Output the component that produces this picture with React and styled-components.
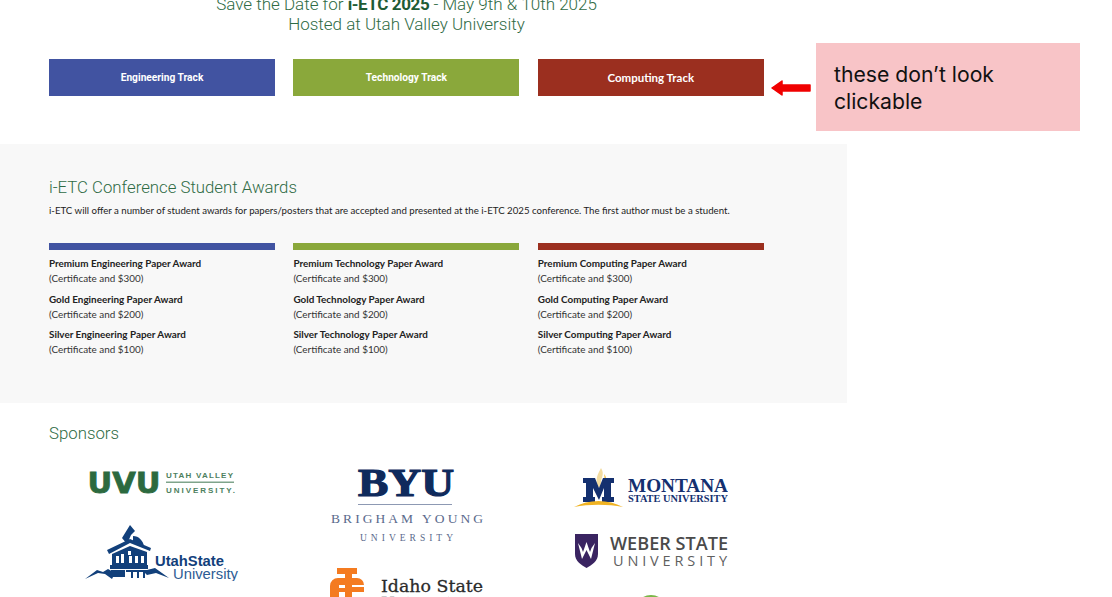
import React from 'react';
import styled, { createGlobalStyle } from 'styled-components';

const COLORS = {
  engineering: '#4153a1',
  technology: '#8aa83b',
  computing: '#9b2f1f',
  heading: '#2f6b45',
  navy: '#0f2a5c',
};

const tracks = [
  { name: 'Engineering', color: COLORS.engineering, font: 'Rajdhani' },
  { name: 'Technology', color: COLORS.technology, font: 'Rajdhani' },
  { name: 'Computing', color: COLORS.computing, font: 'Lato' },
];

const levels = [
  { level: 'Premium', prize: '$300' },
  { level: 'Gold', prize: '$200' },
  { level: 'Silver', prize: '$100' },
];

const GlobalStyle = createGlobalStyle`
  html, body {
    margin: 0;
    padding: 0;
    background: #fff;
  }
`;

const UvuLogo = () => (
  <svg width="147" height="28" viewBox="0 0 147 28">
    <text x="-1.500" y="25" fontFamily="DejaVu Sans" fontWeight="700" fontSize="29" textLength="73" lengthAdjust="spacingAndGlyphs" fill="#2c6a3f" stroke="#2c6a3f" strokeWidth="0.8">UVU</text>
    <text x="77" y="10" fontFamily="Liberation Sans" fontWeight="700" fontSize="8" textLength="67" fill="#4d7f5e">UTAH VALLEY</text>
    <rect x="77" y="13.500" width="68" height="1.500" fill="#7fa48b" />
    <text x="77" y="25" fontFamily="Liberation Sans" fontWeight="700" fontSize="8" textLength="69" fill="#4d7f5e">UNIVERSITY.</text>
  </svg>
);

const UsuLogo = () => (
  <svg width="155" height="58" viewBox="0 0 155 58">
    <g fill="#12407b">
      <path d="M0 56 L12 47 L18 49 L23 46 L30 50 L27 56 L20 51 L13 50 Z" />
      <path d="M58 48 L70 45 L84 55 L71 50 L62 52 Z" />
      <path d="M37 15 L45 2 L50 8 L46 12 L42 21 Z" />
      <path d="M48 13 C54 13 58 18 59 23 L48 19 Z" />
      <path d="M22 27 L45 16 L66 25 L65 28 L45 20 L24 31 Z" />
      <path d="M27 31 L45 23 L62 29 V42 H27 Z" />
      <rect x="25" y="42" width="38" height="4" />
      <rect x="26" y="47" width="14" height="7" />
      <path d="M41 47 H62 V49 H60 V55 H58 V49 H54 V55 H52 V49 H48 V55 H46 V49 H41 Z" />
    </g>
    <path d="M31 33 h3 v7 h-3 z M36 31 h3 v9 h-3 z M43 28 h3 v4 h-3 z M44 33 h3 v7 h-3 z M50 33 h3 v7 h-3 z M56 33 h3 v7 h-3 z" fill="#fff" />
    <text x="70" y="43" fontFamily="Liberation Sans" fontWeight="700" fontSize="14" textLength="69" lengthAdjust="spacingAndGlyphs" fill="#12407b">UtahState</text>
    <text x="88" y="56" fontFamily="Liberation Sans" fontSize="15" textLength="65" lengthAdjust="spacingAndGlyphs" fill="#2d5c94">University</text>
  </svg>
);

const ByuLogo = () => (
  <svg width="153" height="73" viewBox="0 0 153 73">
    <text x="28" y="28" fontFamily="Liberation Serif" fontWeight="700" fontSize="39" textLength="96" lengthAdjust="spacingAndGlyphs" stroke={COLORS.navy} strokeWidth="1.200" fill={COLORS.navy}>BYU</text>
    <rect x="28" y="36" width="94" height="1" fill="#8d99b3" />
    <text x="1" y="55" fontFamily="Liberation Serif" fontSize="13.500" textLength="152" fill="#5a6a8c">BRIGHAM YOUNG</text>
    <text x="30" y="73" fontFamily="Liberation Serif" fontSize="9.500" textLength="93" fill="#5a6a8c">UNIVERSITY</text>
  </svg>
);

const IdahoLogo = () => (
  <svg width="153" height="50" viewBox="0 0 153 50">
    <g fill="#f47b20">
      <rect x="7" y="0" width="20" height="6" />
      <rect x="15" y="6" width="7" height="6" />
      <path d="M8 10 H27 A7 7 0 0 1 34 17 H9 V29 H0 V18 A8 8 0 0 1 8 10 Z" />
      <rect x="15" y="17" width="7" height="12" />
      <path d="M22 19 H34 V24 H22 Z" />
      <path d="M9 20 H15 V24 H9 Z" />
    </g>
    <text x="51" y="24" fontFamily="DejaVu Serif" fontSize="17.500" textLength="102" lengthAdjust="spacingAndGlyphs" stroke="#2b2b2b" strokeWidth="0.3" fill="#2b2b2b">Idaho State</text>
    <text x="51" y="41" fontFamily="DejaVu Serif" fontSize="17.500" textLength="86" lengthAdjust="spacingAndGlyphs" stroke="#2b2b2b" strokeWidth="0.3" fill="#2b2b2b">University</text>
  </svg>
);

const MontanaLogo = () => (
  <svg width="154" height="39" viewBox="0 0 154 39">
    <path d="M25 20 C20 12 24 6 27 0 C31 6 27 10 27 14 C27 17 26 19 25 20 Z" fill="#f3dca0" />
    <path d="M27 20 C28 15 32 11 30 6 C34 10 31 16 27 20 Z" fill="#f0b323" />
    <path d="M9 10 H21 L25 20 L29 10 H40 V15 H37 V29 H40 V34 H28 V29 H30 V20 L25 32 L19 20 V29 H21 V34 H9 V29 H12 V15 H9 Z" fill="#14306f" />
    <path d="M0 39 C15 31 34 31 49 39 C34 36 15 36 0 39 Z" fill="#f0b323" />
    <text x="54" y="24" fontFamily="Liberation Serif" fontWeight="700" fontSize="19" textLength="100" lengthAdjust="spacingAndGlyphs" fill="#14306f">MONTANA</text>
    <text x="54" y="34" fontFamily="Liberation Serif" fontWeight="700" fontSize="10.500" textLength="100" lengthAdjust="spacingAndGlyphs" fill="#14306f">STATE UNIVERSITY</text>
  </svg>
);

const WeberLogo = () => (
  <svg width="154" height="34" viewBox="0 0 154 34">
    <path d="M1 0 H24 V20 C24 27 18 31 12.500 34 C7 31 1 27 1 20 Z" fill="#3a2461" />
    <path d="M4 9 L8 25 L12.500 16 L17 25 L21 9 L17.500 14 L16 18 L12.500 8 L9 18 L7.500 14 Z" fill="#fff" />
    <text x="36" y="16" fontFamily="Open Sans" fontWeight="600" fontSize="17.500" textLength="118" lengthAdjust="spacingAndGlyphs" fill="#4a4a4a">WEBER STATE</text>
    <text x="39" y="32" fontFamily="Open Sans" fontSize="14.500" textLength="114" fill="#5f5f5f">UNIVERSITY</text>
  </svg>
);

const GreenArc = () => (
  <svg width="26" height="10" viewBox="0 0 26 10">
    <ellipse cx="13" cy="10" rx="13" ry="10" fill="#7ab648" />
  </svg>
);

const sponsorColumns = [
  [UvuLogo, UsuLogo],
  [ByuLogo, IdahoLogo],
  [MontanaLogo, WeberLogo, GreenArc],
];

const App = () => {
  return (
    <Page>
      <GlobalStyle />
      <Content>
        <Hero>
          <SaveDate>
            <div>Save the Date for <strong>i-ETC 2025</strong> - May 9th &amp; 10th 2025</div>
            <div>Hosted at Utah Valley University</div>
          </SaveDate>
          <Columns>
            {tracks.map((track) => (
              <TrackButton key={track.name} $color={track.color} $lato={track.font === 'Lato'}>
                {track.name} Track
              </TrackButton>
            ))}
          </Columns>
        </Hero>

        <Awards>
          <SectionTitle>i-ETC Conference Student Awards</SectionTitle>
          <Intro>
            i-ETC will offer a number of student awards for papers/posters that are accepted and presented at the i-ETC 2025 conference. The first author must be a student.
          </Intro>
          <Columns>
            {tracks.map((track) => (
              <AwardColumn key={track.name}>
                <ColorBar $color={track.color} />
                {levels.map((item) => (
                  <Award key={item.level}>
                    <AwardName>{item.level} {track.name} Paper Award</AwardName>
                    <div>(Certificate and {item.prize})</div>
                  </Award>
                ))}
              </AwardColumn>
            ))}
          </Columns>
        </Awards>

        <Sponsors>
          <SectionTitle>Sponsors</SectionTitle>
          <Columns>
            {sponsorColumns.map((logos, i) => (
              <LogoColumn key={i}>
                {logos.map((Logo, j) => <Logo key={j} />)}
              </LogoColumn>
            ))}
          </Columns>
        </Sponsors>
      </Content>

      <Arrow width="41" height="18" viewBox="0 0 41 18">
        <path d="M1 9 L11 2 V6 H39 V12 H11 V16 Z" fill="#f00000" stroke="#f00000" strokeWidth="1.500" strokeLinejoin="round" />
      </Arrow>
      <Note>these don’t look clickable</Note>
    </Page>
  );
};

const Page = styled.div`
  position: relative;
  width: 1112px;
  height: 597px;
  overflow: hidden;
  background: #fff;
`;

const Content = styled.main`
  width: 847px;
`;

const Columns = styled.div`
  display: grid;
  grid-template-columns: repeat(3, 226px);
  column-gap: 18.4px;
`;

const Hero = styled.section`
  display: flow-root;
  height: 144px;
  box-sizing: border-box;
  padding: 0 49px;
`;

const SaveDate = styled.div`
  width: 715px;
  margin: -6px 0 25px;
  text-align: center;
  font-family: 'Roboto', sans-serif;
  font-weight: 300;
  font-size: 17px;
  line-height: 20px;
  color: ${COLORS.heading};

  strong {
    font-weight: 700;
    letter-spacing: -0.4px;
    color: #1f5c35;
  }
`;

const TrackButton = styled.div`
  height: 37px;
  display: flex;
  align-items: center;
  justify-content: center;
  background: ${(p) => p.$color};
  color: #fff;
  font-family: ${(p) => (p.$lato ? "'Lato', sans-serif" : "'Roboto', sans-serif")};
  font-weight: 700;
  font-size: ${(p) => (p.$lato ? '11.5px' : '10.2px')};
`;

const Awards = styled.section`
  height: 259px;
  box-sizing: border-box;
  padding: 32px 49px 0;
  background: #f8f8f8;
`;

const SectionTitle = styled.h2`
  margin: 0;
  font-family: 'Roboto', sans-serif;
  font-weight: 300;
  font-size: 16.8px;
  line-height: 22px;
  color: ${COLORS.heading};
`;

const Intro = styled.p`
  margin: 5px 0 26px;
  font-family: 'Lato', sans-serif;
  font-size: 9.66px;
  line-height: 14px;
  color: #222;
  white-space: nowrap;
`;

const AwardColumn = styled.div`
  font-family: 'Lato', sans-serif;
  font-size: 9.9px;
  line-height: 15px;
  color: #333;
`;

const ColorBar = styled.div`
  height: 7px;
  margin-bottom: 6px;
  background: ${(p) => p.$color};
`;

const Award = styled.div`
  margin-bottom: 5.5px;
`;

const AwardName = styled.div`
  font-weight: 700;
  color: #222;
`;

const Sponsors = styled.section`
  padding: 19px 49px 0;
`;

const LogoColumn = styled.div`
  display: flex;
  flex-direction: column;
  align-items: center;
  gap: 27px;
  padding-top: 24px;

  svg {
    display: block;
    flex: none;
  }
`;

const Arrow = styled.svg`
  position: absolute;
  left: 771px;
  top: 79px;
`;

const Note = styled.aside`
  position: absolute;
  left: 816px;
  top: 43px;
  width: 264px;
  height: 88px;
  box-sizing: border-box;
  padding: 18px 60px 0 18px;
  background: #f8c4c7;
  font-family: 'Inter', sans-serif;
  font-size: 21.2px;
  line-height: 27px;
  color: #111;
`;

export default App;
